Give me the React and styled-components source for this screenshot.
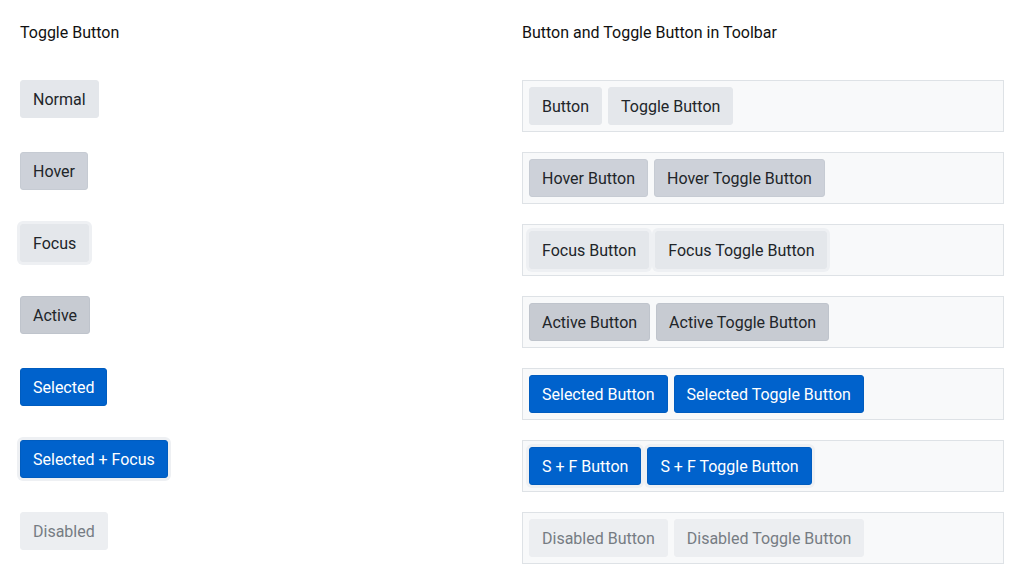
import React from "react";
import styled, { createGlobalStyle, css } from "styled-components";

const Global = createGlobalStyle`
  html, body { margin: 0; padding: 0; background: #fff; }
  body { font-family: Roboto, "Liberation Sans", sans-serif; }
  #root { width: 1024px; height: 584px; }
`;

const Page = styled.div`
  box-sizing: border-box;
  width: 1024px;
  padding: 20px;
  display: grid;
  grid-template-columns: 1fr 1fr;
  column-gap: 20px;
`;

const Column = styled.section`
  display: flex;
  flex-direction: column;
  gap: 20px;
`;

const Heading = styled.h2`
  margin: 0 0 16px 0;
  padding-top: 1px;
  height: 24px;
  box-sizing: border-box;
  font-size: 16px;
  line-height: 24px;
  font-weight: 400;
  color: #111;
`;

const Row = styled.div`
  height: 52px;
  display: flex;
  align-items: flex-start;
`;

const Toolbar = styled.div`
  box-sizing: border-box;
  width: 100%;
  height: 52px;
  border: 1px solid #dee2e6;
  background: #f8f9fa;
  padding: 6px;
  display: flex;
  gap: 6px;
  align-items: flex-start;
`;

const variants = {
  normal: css`
    background: #e4e7eb;
    border-color: #e4e7eb;
    color: #212529;
  `,
  hover: css`
    background: #cdd1d9;
    border-color: #c6cbd3;
    color: #212529;
  `,
  focus: css`
    background: #e4e7eb;
    border-color: #e4e7eb;
    color: #212529;
    box-shadow: 0 0 0 3px #eef0f3;
  `,
  active: css`
    background: #c7cbd2;
    border-color: #bfc4cc;
    color: #212529;
  `,
  selected: css`
    background: #0062cc;
    border-color: #005cbf;
    color: #fff;
  `,
  selfocus: css`
    background: #0062cc;
    border-color: #005cbf;
    color: #fff;
    box-shadow: 0 0 0 3px #eef0f3;
  `,
  disabled: css`
    background: #eceef1;
    border-color: #eceef1;
    color: #767c83;
  `,
};

const Btn = styled.button`
  box-sizing: border-box;
  height: 38px;
  padding: 7px 12px 5px;
  border: 1px solid transparent;
  border-radius: 3px;
  font-family: Roboto, "Liberation Sans", sans-serif;
  font-size: 16px;
  line-height: 24px;
  white-space: nowrap;
  cursor: pointer;
  ${(p) => variants[p.$variant]}
`;

const left = [
  ["normal", "Normal"],
  ["hover", "Hover"],
  ["focus", "Focus"],
  ["active", "Active"],
  ["selected", "Selected"],
  ["selfocus", "Selected + Focus"],
  ["disabled", "Disabled"],
];

const right = [
  ["normal", "Button", "Toggle Button"],
  ["hover", "Hover Button", "Hover Toggle Button"],
  ["focus", "Focus Button", "Focus Toggle Button"],
  ["active", "Active Button", "Active Toggle Button"],
  ["selected", "Selected Button", "Selected Toggle Button"],
  ["selfocus", "S + F Button", "S + F Toggle Button"],
  ["disabled", "Disabled Button", "Disabled Toggle Button"],
];

export default function App() {
  return (
    <>
      <Global />
      <Page>
        <Column>
          <Heading>Toggle Button</Heading>
          {left.map(([v, t]) => (
            <Row key={v}>
              <Btn $variant={v} disabled={v === "disabled"}>{t}</Btn>
            </Row>
          ))}
        </Column>
        <Column>
          <Heading>Button and Toggle Button in Toolbar</Heading>
          {right.map(([v, a, b]) => (
            <Toolbar key={v}>
              <Btn $variant={v} disabled={v === "disabled"}>{a}</Btn>
              <Btn $variant={v} disabled={v === "disabled"}>{b}</Btn>
            </Toolbar>
          ))}
        </Column>
      </Page>
    </>
  );
}
